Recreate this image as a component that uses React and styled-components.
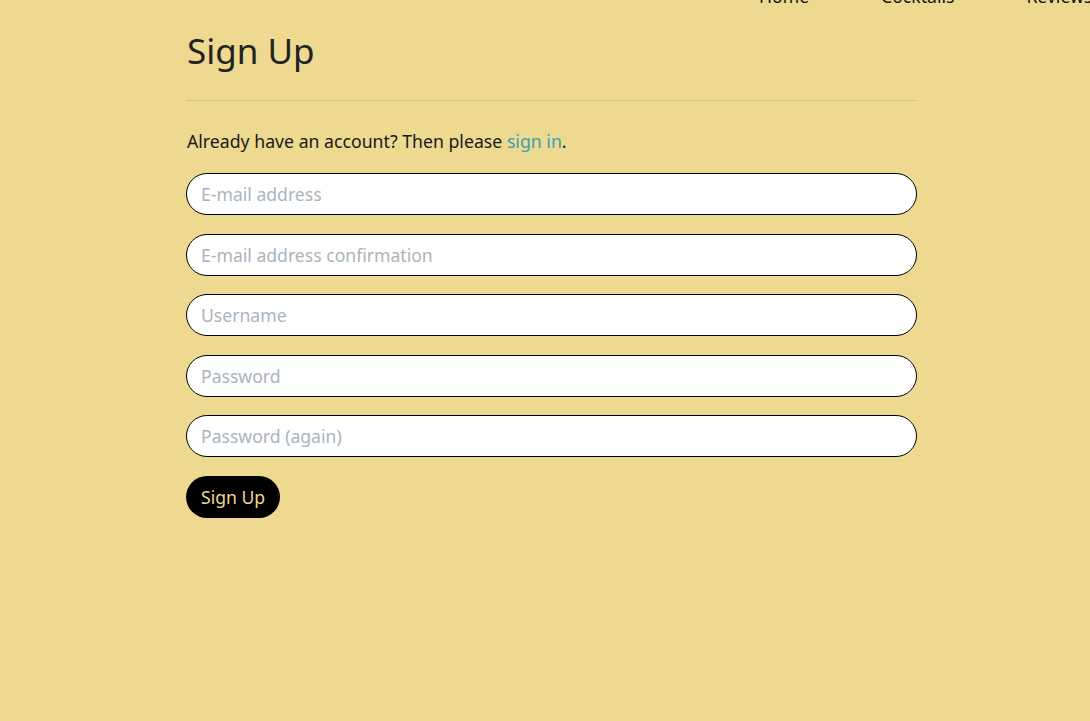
import styled, { createGlobalStyle } from 'styled-components';

const GlobalStyle = createGlobalStyle`
  html, body {
    margin: 0;
    padding: 0;
    background-color: #edd990;
    font-family: "Noto Sans", "Open Sans", sans-serif;
    color: #212529;
  }
  body {
    overflow: hidden;
  }
`;

const Page = styled.div`
  min-height: 721px;
  padding-top: 1px;
  background-color: #edd990;
`;

// nav sits mostly above the visible area (page is scrolled slightly)
const Nav = styled.nav`
  display: flex;
  gap: 72px;
  margin-top: -16px;
  padding-left: 759px;
  height: 22px;
  white-space: nowrap;
  overflow: hidden;
`;

const NavItem = styled.a`
  font-size: 17.6px;
  line-height: 22px;
  color: #111;
  text-decoration: none;
`;

const Container = styled.main`
  width: 731px;
  margin-left: 186px;
`;

const Title = styled.h1`
  font-size: 35px;
  font-weight: 400;
  margin: 23px 0 0 1px;
  line-height: 1.2;
  color: #222;
`;

const Divider = styled.hr`
  border: none;
  border-top: 1px solid #d4c387;
  margin: 28px 0 28px;
`;

const Intro = styled.p`
  font-size: 17.7px;
  margin: 0 0 20px 1px;
  line-height: 24px;
  color: #1a1a1a;
`;

const Link = styled.a`
  color: #3a9fb0;
  text-decoration: none;
`;

const Form = styled.form`
  display: flex;
  flex-direction: column;
  align-items: flex-start;
  gap: 18.5px;
`;

const Input = styled.input`
  box-sizing: border-box;
  width: 100%;
  height: 42px;
  border: 1px solid #000;
  border-radius: 21px;
  background: #fff;
  padding: 0 14px;
  font-family: inherit;
  font-size: 17.6px;
  color: #333;
  outline: none;

  &::placeholder {
    color: #a9b4bd;
  }
`;

const Button = styled.button`
  height: 42px;
  padding: 0 15px;
  border: none;
  border-radius: 21px;
  background: #000;
  color: #edd990;
  font-family: inherit;
  font-size: 17.6px;
  cursor: pointer;
`;

const fields = [
  { type: 'email', placeholder: 'E-mail address' },
  { type: 'email', placeholder: 'E-mail address confirmation' },
  { type: 'text', placeholder: 'Username' },
  { type: 'password', placeholder: 'Password' },
  { type: 'password', placeholder: 'Password (again)' },
];

const App = () => {
  return (
    <Page>
      <GlobalStyle />
      <Nav>
        <NavItem href="#">Home</NavItem>
        <NavItem href="#">Cocktails</NavItem>
        <NavItem href="#">Reviews</NavItem>
      </Nav>
      <Container>
        <Title>Sign Up</Title>
        <Divider />
        <Intro>
          Already have an account? Then please <Link href="#">sign in</Link>.
        </Intro>
        <Form onSubmit={(e) => e.preventDefault()}>
          {fields.map((f) => (
            <Input key={f.placeholder} type={f.type} placeholder={f.placeholder} />
          ))}
          <Button type="submit">Sign Up</Button>
        </Form>
      </Container>
    </Page>
  );
};

export default App;
